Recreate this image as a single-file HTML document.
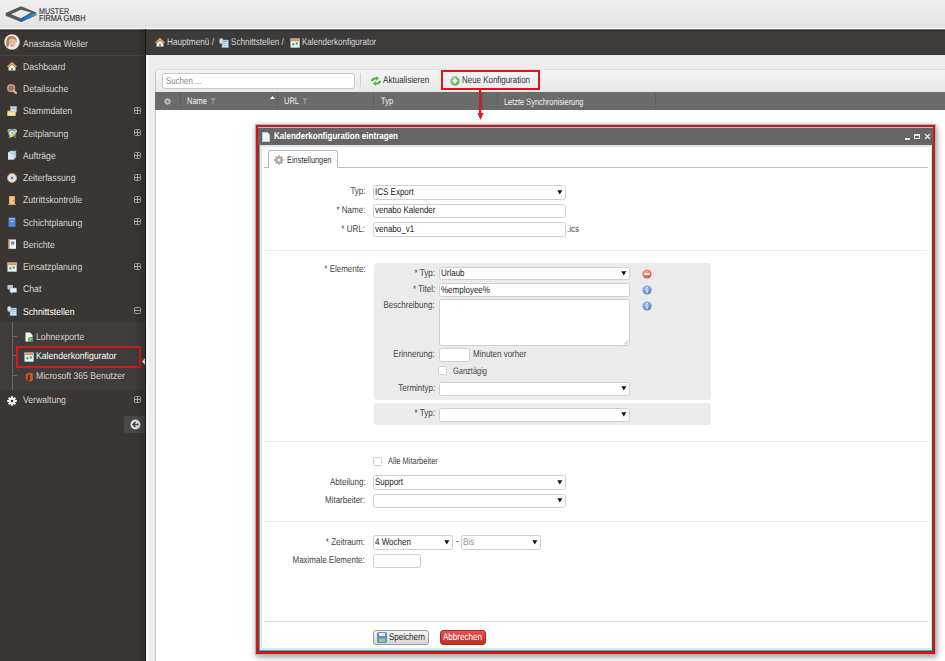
<!DOCTYPE html>
<html><head><meta charset="utf-8"><style>
html,body{margin:0;padding:0;}
body{width:945px;height:661px;overflow:hidden;position:relative;font-family:"Liberation Sans",sans-serif;background:#ececec;}
.r{position:absolute;}
.t{position:absolute;white-space:nowrap;line-height:1;text-rendering:geometricPrecision;}
.pm{width:5px;height:5px;border:1px solid #aaa49f;border-radius:1.5px;}
.pm i{position:absolute;background:#b9b3ae;}
.pm .h{left:0px;top:2px;width:5px;height:1px;}
.pm .v{left:2px;top:0px;width:1px;height:5px;}
</style></head>
<body>
<div class="r" style="left:0px;top:0px;width:945px;height:29px;background:linear-gradient(#f0f0f0,#e2e2e2);"></div>
<div class="r" style="left:0px;top:28px;width:945px;height:1px;background:#f6f6f6;"></div>
<svg class="r" style="left:0px;top:0px" width="40" height="26" viewBox="0 0 40 26"><path fill-rule="evenodd" d="M5.7 13 L21 6.2 L36.4 12.4 V15.2 L21 22 L5.7 15.8Z M11 14.3 L21 18.3 L31 12.6 L21 9.8Z" fill="#585858"/><defs><linearGradient id="lg" x1="0" x2="1"><stop offset="0" stop-color="#1060c8"/><stop offset="0.75" stop-color="#2090d0"/><stop offset="1" stop-color="#20b898"/></linearGradient></defs><path d="M21 18.6 L36.4 12.4 V15.2 L21 22Z" fill="url(#lg)"/></svg>
<div class="t" style="left:39.00px;top:7.00px;font-size:8.44px;color:#303030;font-weight:normal;transform:scaleX(0.8475);transform-origin:0 0;-webkit-text-stroke:0.12px #303030;">MUSTER</div>
<div class="t" style="left:39.00px;top:14.00px;font-size:8.68px;color:#303030;font-weight:normal;transform:scaleX(0.8475);transform-origin:0 0;-webkit-text-stroke:0.12px #303030;">FIRMA GMBH</div>
<div class="r" style="left:0px;top:29px;width:146px;height:632px;background:#3a3633;"></div>
<div class="r" style="left:0px;top:55px;width:146px;height:1px;background:#4a4542;"></div>
<svg class="r" style="left:3.5px;top:33.5px" width="16" height="16" viewBox="0 0 16 16"><defs><clipPath id="av"><circle cx="8" cy="8" r="6.9"/></clipPath></defs><circle cx="8" cy="8" r="7.8" fill="#d8d4d0"/><circle cx="8" cy="8" r="6.9" fill="#f4f1ee"/><g clip-path="url(#av)"><path d="M2.5 13 Q1.5 4 5 2.5 Q8.5 1.2 11.5 3.5 Q13.5 6 12.5 9 L11 6 Q8 4.5 5.5 6 L4.5 13Z" fill="#a88058"/><ellipse cx="8.3" cy="8.8" rx="3.4" ry="4.6" fill="#e6c0a6"/><path d="M5 5.5 Q8 3.8 11.6 6 L11.2 4.2 Q8 2.6 5 4.2Z" fill="#b89068"/><ellipse cx="8.3" cy="11.4" rx="1.3" ry="0.6" fill="#d88888"/><path d="M6 8.2H7.2M9.4 8.2H10.6" stroke="#9a7a70" stroke-width="0.6"/></g></svg>
<div class="t" style="left:22.80px;top:40.00px;font-size:9.80px;color:#d9d2cb;font-weight:normal;transform:scaleX(0.8857);transform-origin:0 0;">Anastasia Weiler</div>
<div class="t" style="left:22.90px;top:63.00px;font-size:9.80px;color:#d9d2cb;font-weight:normal;transform:scaleX(0.8837);transform-origin:0 0;">Dashboard</div>
<svg class="r" style="left:7px;top:61.4px" width="10" height="10" viewBox="0 0 10 10"><path d="M5 3.6 L8.4 6.4 V9.4 H1.6 V6.4Z" fill="#f6f6f6"/><rect x="4" y="6.4" width="2" height="3" rx="0.8" fill="#8c8c8c"/><path d="M0 5.6 L5 0.8 L10 5.6 L8.6 6.6 L5 3.2 L1.4 6.6Z" fill="#e4a458"/><path d="M0.3 9.8 Q1.5 8.4 2.8 9.2 H7.2 Q8.5 8.4 9.7 9.8Z" fill="#42b042"/></svg>
<div class="t" style="left:22.90px;top:85.00px;font-size:9.80px;color:#d9d2cb;font-weight:normal;transform:scaleX(0.8837);transform-origin:0 0;">Detailsuche</div>
<svg class="r" style="left:7px;top:83.7px" width="10" height="10" viewBox="0 0 10 10"><circle cx="4.2" cy="4.2" r="3.4" fill="#7a7f86" stroke="#d89a50" stroke-width="1.4"/><path d="M6.6 6.6 L9 9" stroke="#e8b070" stroke-width="2.2" stroke-linecap="round"/></svg>
<div class="t" style="left:22.90px;top:107.00px;font-size:9.80px;color:#d9d2cb;font-weight:normal;transform:scaleX(0.8837);transform-origin:0 0;">Stammdaten</div>
<svg class="r" style="left:7px;top:105.9px" width="10" height="10" viewBox="0 0 10 10"><rect x="3.5" y="0.5" width="6" height="5.5" fill="#cfe2f6" stroke="#8fb0d8" stroke-width="0.6"/><rect x="4.5" y="2" width="4" height="1" fill="#7ac070"/><path d="M0.5 4.5 H3.5 L4.5 5.5 H8.5 V9.8 H0.5Z" fill="#f2c860"/><rect x="0.5" y="6.2" width="8" height="3.6" fill="#fbe39a"/></svg>
<div class="r pm" style="left:134px;top:107px"><i class="h"></i><i class="v"></i></div>
<div class="t" style="left:22.90px;top:130.00px;font-size:9.80px;color:#d9d2cb;font-weight:normal;transform:scaleX(0.8837);transform-origin:0 0;">Zeitplanung</div>
<svg class="r" style="left:7px;top:128.2px" width="10" height="10" viewBox="0 0 10 10"><ellipse cx="2.4" cy="2.4" rx="2" ry="1.4" transform="rotate(-40 2.4 2.4)" fill="#f0c040"/><ellipse cx="8" cy="2.4" rx="2" ry="1.4" transform="rotate(40 8 2.4)" fill="#f0c040"/><path d="M2 9.6L3 8.3M8.6 9.6L7.6 8.3" stroke="#e8e8e8" stroke-width="1"/><circle cx="5.2" cy="5" r="4" fill="#5a9ad8"/><circle cx="4.8" cy="5.2" r="2.5" fill="#e8f4fc"/><circle cx="5.2" cy="5" r="0.7" fill="#333"/><path d="M3.2 9.4L8.8 3.6" stroke="#f2d040" stroke-width="1.8"/><path d="M8.2 4.2L9.6 2.8" stroke="#f0c8a0" stroke-width="1.8"/></svg>
<div class="r pm" style="left:134px;top:129px"><i class="h"></i><i class="v"></i></div>
<div class="t" style="left:22.90px;top:152.00px;font-size:9.80px;color:#d9d2cb;font-weight:normal;transform:scaleX(0.8837);transform-origin:0 0;">Aufträge</div>
<svg class="r" style="left:7px;top:150.4px" width="10" height="10" viewBox="0 0 10 10"><path d="M1 2.5 L3.5 0.8 H9.2 V7.5 L6.8 9.5 H1Z" fill="#a9c6ee"/><path d="M1 2.5 H6.8 V9.5 H1Z" fill="#d6e6f8"/><path d="M3.5 3.8 H8.5" stroke="#8cd070" stroke-width="0.8"/></svg>
<div class="r pm" style="left:134px;top:152px"><i class="h"></i><i class="v"></i></div>
<div class="t" style="left:22.90px;top:174.00px;font-size:9.80px;color:#d9d2cb;font-weight:normal;transform:scaleX(0.8837);transform-origin:0 0;">Zeiterfassung</div>
<svg class="r" style="left:7px;top:172.7px" width="10" height="10" viewBox="0 0 10 10"><circle cx="5" cy="5" r="4.4" fill="#f2f2f2" stroke="#c8a064" stroke-width="1.1"/><circle cx="5" cy="5" r="2.6" fill="#b8d4f0"/><circle cx="5" cy="5" r="0.9" fill="#555"/></svg>
<div class="r pm" style="left:134px;top:174px"><i class="h"></i><i class="v"></i></div>
<div class="t" style="left:22.90px;top:196.00px;font-size:9.80px;color:#d9d2cb;font-weight:normal;transform:scaleX(0.8837);transform-origin:0 0;">Zutrittskontrolle</div>
<svg class="r" style="left:7px;top:194.9px" width="10" height="10" viewBox="0 0 10 10"><rect x="2" y="1" width="6" height="8.5" fill="#e8b060"/><rect x="3" y="2" width="4" height="6.8" fill="#f3c87e"/><circle cx="6.2" cy="5.4" r="0.5" fill="#a06020"/><path d="M1 9.6 H9" stroke="#ddd" stroke-width="0.6"/></svg>
<div class="r pm" style="left:134px;top:196px"><i class="h"></i><i class="v"></i></div>
<div class="t" style="left:22.90px;top:219.00px;font-size:9.80px;color:#d9d2cb;font-weight:normal;transform:scaleX(0.8837);transform-origin:0 0;">Schichtplanung</div>
<svg class="r" style="left:7px;top:217.2px" width="10" height="10" viewBox="0 0 10 10"><rect x="1.5" y="0.5" width="7" height="9.3" rx="0.6" fill="#4a8ad8"/><rect x="2.2" y="1.2" width="5.6" height="1.5" fill="#8ab8ee"/><rect x="3.2" y="4" width="3.6" height="0.7" fill="#b8d8f8"/></svg>
<div class="r pm" style="left:134px;top:218px"><i class="h"></i><i class="v"></i></div>
<div class="t" style="left:22.90px;top:241.00px;font-size:9.80px;color:#d9d2cb;font-weight:normal;transform:scaleX(0.8837);transform-origin:0 0;">Berichte</div>
<svg class="r" style="left:7px;top:239.4px" width="10" height="10" viewBox="0 0 10 10"><rect x="1" y="0.5" width="8" height="9.3" fill="#f6f6f6"/><rect x="1" y="0.5" width="1.6" height="9.3" fill="#d08050"/><rect x="4" y="2.5" width="3.5" height="3" fill="#5a90d8"/><rect x="4.5" y="6.5" width="2.5" height="0.6" fill="#aaa"/></svg>
<div class="t" style="left:22.90px;top:263.00px;font-size:9.80px;color:#d9d2cb;font-weight:normal;transform:scaleX(0.8837);transform-origin:0 0;">Einsatzplanung</div>
<svg class="r" style="left:7px;top:261.6px" width="10" height="10" viewBox="0 0 10 10"><rect x="0.8" y="0.8" width="8.6" height="8.6" fill="#eef4fb" stroke="#a8c4e4" stroke-width="0.8"/><rect x="1.2" y="1.2" width="7.8" height="2" fill="#f08a3a"/><circle cx="3.4" cy="6.3" r="1.2" fill="#48b048"/><circle cx="6.8" cy="5.5" r="1.2" fill="#48b048"/></svg>
<div class="r pm" style="left:134px;top:263px"><i class="h"></i><i class="v"></i></div>
<div class="t" style="left:22.90px;top:285.00px;font-size:9.80px;color:#d9d2cb;font-weight:normal;transform:scaleX(0.8837);transform-origin:0 0;">Chat</div>
<svg class="r" style="left:7px;top:283.9px" width="10" height="10" viewBox="0 0 10 10"><path d="M0.5 1 H6 V5 H3 L1.5 6.5 V5 H0.5Z" fill="#b8c4d0"/><path d="M3 4 H9.6 V8.3 H6 L4.5 9.8 V8.3 H3Z" fill="#e8f2fc" stroke="#88aad0" stroke-width="0.5"/></svg>
<div class="t" style="left:22.90px;top:308.00px;font-size:9.80px;color:#ffffff;font-weight:normal;transform:scaleX(0.8837);transform-origin:0 0;">Schnittstellen</div>
<svg class="r" style="left:7px;top:306.1px" width="10" height="10" viewBox="0 0 10 10"><rect x="3" y="2" width="6.5" height="7.8" fill="#d6e6f8" stroke="#5c8cc8" stroke-width="0.6"/><rect x="4" y="3" width="4.5" height="1" fill="#7cc070"/><path d="M4 5.5 H8.5 M4 7.3 H8.5 M6.2 4.5 V9" stroke="#8cb0d8" stroke-width="0.5"/><rect x="0.5" y="0.3" width="3.5" height="5.5" rx="1.7" fill="#e4e4e4" stroke="#9a9a9a" stroke-width="0.5"/></svg>
<div class="r pm" style="left:134px;top:307px"><i class="h"></i></div>
<div class="r" style="left:0px;top:322px;width:146px;height:67.5px;background:#3f3d3b;"></div>
<div class="r" style="left:12px;top:322px;width:1px;height:67.5px;background:#6a6663;"></div>
<div class="r" style="left:13px;top:336px;width:4px;height:1px;background:#6a6663;"></div>
<div class="r" style="left:13px;top:355px;width:4px;height:1px;background:#6a6663;"></div>
<div class="r" style="left:13px;top:375px;width:4px;height:1px;background:#6a6663;"></div>
<div class="t" style="left:36.40px;top:333.00px;font-size:9.80px;color:#d9d2cb;font-weight:normal;transform:scaleX(0.8857);transform-origin:0 0;">Lohnexporte</div>
<svg class="r" style="left:24px;top:332px" width="10" height="10" viewBox="0 0 10 10"><path d="M1.5 0.5 H6 L8.5 3 V9.5 H1.5Z" fill="#f6f6f6"/><path d="M6 0.5 V3 H8.5" fill="#ddd"/><circle cx="6.6" cy="7.4" r="2.5" fill="#3ca83c"/><path d="M5.4 7.4 H7.8 M6.6 6.2 V8.6" stroke="#bfe8b0" stroke-width="0.7"/></svg>
<svg class="r" style="left:24px;top:352px" width="10" height="10" viewBox="0 0 10 10"><rect x="0.8" y="0.8" width="8.6" height="8.6" fill="#eef4fb" stroke="#a8c4e4" stroke-width="0.8"/><rect x="1.2" y="1.2" width="7.8" height="2" fill="#f08a3a"/><circle cx="3.4" cy="6.3" r="1.2" fill="#48b048"/><circle cx="6.8" cy="5.5" r="1.2" fill="#48b048"/></svg>
<svg class="r" style="left:23.5px;top:372px" width="10" height="10" viewBox="0 0 10 10"><path d="M1.8 2.3 L6.2 0.5 L8.8 1.6 V8.4 L6.2 9.6 L1.8 7.9 L6.2 8.5 V2 L3.7 2.9 V7.1 L1.8 7.9Z" fill="#e8501c"/></svg>
<svg class="r" style="left:7px;top:395.5px" width="10" height="10" viewBox="0 0 10 10"><g fill="#f0f0f0"><circle cx="5" cy="5" r="3.4"/><path d="M4 0.2H6V2H4ZM4 8H6V9.8H4ZM0.2 4H2V6H0.2ZM8 4H9.8V6H8Z"/><path d="M4 0.2H6V2H4ZM4 8H6V9.8H4ZM0.2 4H2V6H0.2ZM8 4H9.8V6H8Z" transform="rotate(45 5 5)"/></g><circle cx="5" cy="5" r="1.3" fill="#3a3633"/></svg>
<div class="t" style="left:36.40px;top:352.00px;font-size:9.80px;color:#ffffff;font-weight:normal;transform:scaleX(0.8837);transform-origin:0 0;">Kalenderkonfigurator</div>
<div class="t" style="left:36.40px;top:372.00px;font-size:9.80px;color:#d9d2cb;font-weight:normal;transform:scaleX(0.8827);transform-origin:0 0;">Microsoft 365 Benutzer</div>
<div class="r" style="left:16px;top:346px;width:125px;height:22px;border:2px solid #d9161c;box-sizing:border-box;"></div>
<svg class="r" style="left:142px;top:357px" width="4" height="9"><polygon points="4,0 0,4.5 4,9" fill="#f0f0f0"/></svg>
<div class="t" style="left:22.50px;top:396.00px;font-size:9.80px;color:#d9d2cb;font-weight:normal;transform:scaleX(0.8837);transform-origin:0 0;">Verwaltung</div>
<div class="r pm" style="left:134px;top:396px"><i class="h"></i><i class="v"></i></div>
<div class="r" style="left:124px;top:416px;width:22px;height:17px;background:#4a4846;border-radius:3px 0 0 3px;"></div>
<svg class="r" style="left:130px;top:419px" width="11" height="11" viewBox="0 0 11 11">
<circle cx="5.5" cy="5.5" r="5" fill="#e0e0e0"/><path d="M8.5 5.5H3.2M5.5 3L3 5.5 5.5 8" stroke="#4a4846" stroke-width="1.6" fill="none"/></svg>
<div class="r" style="left:146px;top:29px;width:799px;height:26px;background:#3d3b39;"></div>
<div class="r" style="left:0px;top:29px;width:945px;height:1px;background:#7c7a78;"></div>
<div class="r" style="left:0px;top:30px;width:945px;height:1px;background:#2c2a28;"></div>
<div class="r" style="left:146px;top:55px;width:799px;height:606px;background:#ededed;"></div>
<div class="r" style="left:147px;top:55px;width:1px;height:606px;background:#fdfdfd;"></div>
<div class="r" style="left:145px;top:29px;width:1px;height:632px;background:#1e1a17;"></div>
<div class="r" style="left:133px;top:29px;width:12px;height:632px;background:linear-gradient(to right,rgba(0,0,0,0),rgba(0,0,0,.18));"></div>
<div class="t" style="left:166.90px;top:38.00px;font-size:9.80px;color:#d8d8d8;font-weight:normal;transform:scaleX(0.8367);transform-origin:0 0;">Hauptmenü /</div>
<svg class="r" style="left:154.5px;top:37px" width="10" height="10" viewBox="0 0 10 10"><path d="M5 3.6 L8.4 6.4 V9.4 H1.6 V6.4Z" fill="#f6f6f6"/><rect x="4" y="6.4" width="2" height="3" rx="0.8" fill="#8c8c8c"/><path d="M0 5.6 L5 0.8 L10 5.6 L8.6 6.6 L5 3.2 L1.4 6.6Z" fill="#e4a458"/><path d="M0.3 9.8 Q1.5 8.4 2.8 9.2 H7.2 Q8.5 8.4 9.7 9.8Z" fill="#42b042"/></svg>
<svg class="r" style="left:219px;top:37.5px" width="10" height="10" viewBox="0 0 10 10"><rect x="3" y="2" width="6.5" height="7.8" fill="#d6e6f8" stroke="#5c8cc8" stroke-width="0.6"/><rect x="4" y="3" width="4.5" height="1" fill="#7cc070"/><path d="M4 5.5 H8.5 M4 7.3 H8.5 M6.2 4.5 V9" stroke="#8cb0d8" stroke-width="0.5"/><rect x="0.5" y="0.3" width="3.5" height="5.5" rx="1.7" fill="#e4e4e4" stroke="#9a9a9a" stroke-width="0.5"/></svg>
<svg class="r" style="left:289.5px;top:37.5px" width="10" height="10" viewBox="0 0 10 10"><rect x="0.8" y="0.8" width="8.6" height="8.6" fill="#eef4fb" stroke="#a8c4e4" stroke-width="0.8"/><rect x="1.2" y="1.2" width="7.8" height="2" fill="#f08a3a"/><circle cx="3.4" cy="6.3" r="1.2" fill="#48b048"/><circle cx="6.8" cy="5.5" r="1.2" fill="#48b048"/></svg>
<div class="t" style="left:230.90px;top:38.00px;font-size:9.80px;color:#d8d8d8;font-weight:normal;transform:scaleX(0.8265);transform-origin:0 0;">Schnittstellen /</div>
<div class="t" style="left:302.00px;top:38.00px;font-size:9.80px;color:#d8d8d8;font-weight:normal;transform:scaleX(0.8163);transform-origin:0 0;">Kalenderkonfigurator</div>
<div class="r" style="left:155px;top:69px;width:790px;height:592px;background:#fff;border-left:1px solid #c4c4c4;border-top:1px solid #dedede;border-top-left-radius:4px;box-sizing:border-box;"></div>
<div class="r" style="left:156px;top:70px;width:789px;height:22px;background:linear-gradient(#f4f4f4,#e9e9e9);"></div>
<div class="r" style="left:162px;top:73px;width:193px;height:16px;background:#fff;border:1px solid #c9c9c9;border-radius:3px;box-sizing:border-box;"></div>
<div class="t" style="left:165.50px;top:77.00px;font-size:9.80px;color:#8a8a8a;font-weight:normal;transform:scaleX(0.8061);transform-origin:0 0;">Suchen ...</div>
<div class="r" style="left:360px;top:73px;width:1px;height:14px;background:#d4d4d4;"></div>
<div class="t" style="left:382.60px;top:76.00px;font-size:9.80px;color:#333;font-weight:normal;transform:scaleX(0.8235);transform-origin:0 0;">Aktualisieren</div>
<svg class="r" style="left:370.7px;top:75.5px" width="10" height="10" viewBox="0 0 10 10"><path d="M0.9 5.2 Q1.4 2.4 5.2 2.3" stroke="#5cb35c" stroke-width="2.2" fill="none"/><polygon points="5,0 8.4,2.4 5,4.8" fill="#5cb35c"/><path d="M9.1 4.8 Q8.6 7.6 4.8 7.7" stroke="#5cb35c" stroke-width="2.2" fill="none"/><polygon points="5,5.2 1.6,7.6 5,10" fill="#5cb35c"/></svg>
<svg class="r" style="left:449.8px;top:75.5px" width="10" height="10" viewBox="0 0 10 10"><defs><radialGradient id="gp" cx="0.4" cy="0.35" r="0.75"><stop offset="0" stop-color="#a8dc98"/><stop offset="1" stop-color="#4ea548"/></radialGradient></defs><circle cx="5" cy="5" r="4.7" fill="url(#gp)"/><path d="M2.6 5H7.4M5 2.6V7.4" stroke="#fff" stroke-width="1.5"/></svg>
<div class="t" style="left:462.30px;top:76.00px;font-size:9.80px;color:#333;font-weight:normal;transform:scaleX(0.8102);transform-origin:0 0;">Neue Konfiguration</div>
<div class="r" style="left:441px;top:70px;width:99px;height:20px;border:2px solid #e0141c;box-sizing:border-box;"></div>
<div class="r" style="left:155px;top:92px;width:790px;height:18px;background:#6b6b6b;"></div>
<div class="r" style="left:180px;top:92px;width:1px;height:18px;background:#5f5f5f;"></div>
<div class="r" style="left:277px;top:92px;width:1px;height:18px;background:#5f5f5f;"></div>
<div class="r" style="left:373px;top:92px;width:1px;height:18px;background:#5f5f5f;"></div>
<div class="r" style="left:497px;top:92px;width:1px;height:18px;background:#5f5f5f;"></div>
<div class="r" style="left:655px;top:92px;width:1px;height:18px;background:#5f5f5f;"></div>
<div class="t" style="left:187.20px;top:97.00px;font-size:9.53px;color:#f6f6f6;font-weight:normal;transform:scaleX(0.7874);transform-origin:0 0;">Name</div>
<svg class="r" style="left:164.3px;top:97.7px" width="7" height="7" viewBox="0 0 7 7"><g fill="#b9b9b9"><circle cx="3.5" cy="3.5" r="2.5"/><path d="M2.8 0H4.2V7H2.8ZM0 2.8H7V4.2H0Z"/><path d="M2.8 0H4.2V7H2.8ZM0 2.8H7V4.2H0Z" transform="rotate(45 3.5 3.5)"/></g><circle cx="3.5" cy="3.5" r="1" fill="#6b6b6b"/></svg>
<svg class="r" style="left:210px;top:98px" width="6" height="6" viewBox="0 0 6 6"><path d="M0 0H6L3.8 2.8V6H2.2V2.8Z" fill="#8e8e8e"/></svg>
<svg class="r" style="left:301.5px;top:98px" width="6" height="6" viewBox="0 0 6 6"><path d="M0 0H6L3.8 2.8V6H2.2V2.8Z" fill="#8e8e8e"/></svg>
<svg class="r" style="left:269.8px;top:96.4px" width="5" height="3" viewBox="0 0 5 3"><polygon points="0,3 2.5,0 5,3" fill="#f4f4f4"/></svg>
<div class="t" style="left:283.70px;top:97.00px;font-size:9.53px;color:#f2f2f2;font-weight:normal;transform:scaleX(0.7874);transform-origin:0 0;">URL</div>
<div class="t" style="left:380.60px;top:97.00px;font-size:9.53px;color:#f2f2f2;font-weight:normal;transform:scaleX(0.7874);transform-origin:0 0;">Typ</div>
<div class="t" style="left:503.60px;top:97.00px;font-size:9.41px;color:#f2f2f2;font-weight:normal;transform:scaleX(0.7874);transform-origin:0 0;">Letzte Synchronisierung</div>
<div class="r" style="left:479px;top:90px;width:2px;height:24px;background:#e8141c;box-shadow:1px 1px 2px rgba(0,0,0,.25);"></div>
<svg class="r" style="left:476.5px;top:113px" width="7" height="7" viewBox="0 0 7 7"><polygon points="0.5,0 6.5,0 3.5,7" fill="#e8141c"/></svg>
<div class="r" style="left:255px;top:124px;width:681px;height:531px;background:#a3baba;box-shadow:1px 2px 6px rgba(0,0,0,.4);"></div>
<div class="r" style="left:256px;top:125px;width:679px;height:529px;background:#de0f12;"></div>
<div class="r" style="left:258px;top:127px;width:675px;height:525px;background:#3f5353;"></div>
<div class="r" style="left:259px;top:128px;width:673px;height:523px;background:#8e9090;"></div>
<div class="r" style="left:258px;top:127px;width:675px;height:1px;background:#a9c4c4;"></div>
<div class="r" style="left:258px;top:128px;width:675px;height:17px;background:#656565;"></div>
<div class="r" style="left:260px;top:145px;width:672px;height:505px;background:#dce6ef;"></div>
<div class="r" style="left:262px;top:147px;width:669px;height:501px;background:#fff;"></div>
<div class="t" style="left:273.80px;top:132.00px;font-size:9.80px;color:#ffffff;font-weight:bold;transform:scaleX(0.8194);transform-origin:0 0;">Kalenderkonfiguration eintragen</div>
<svg class="r" style="left:262px;top:132px" width="8" height="10" viewBox="0 0 8 10"><path d="M0.5 0.5H5.5L7.5 2.5V9.5H0.5Z" fill="#eef3fb" stroke="#c9d6e8" stroke-width="0.8"/></svg>
<div class="r" style="left:905px;top:138px;width:5px;height:1.5px;background:#e6e6e6;"></div>
<div class="r" style="left:914px;top:134px;width:6px;height:5px;border:1px solid #e6e6e6;border-top-width:2px;box-sizing:border-box;"></div>
<svg class="r" style="left:924px;top:133px" width="7" height="7" viewBox="0 0 7 7"><path d="M1 1L6 6M6 1L1 6" stroke="#ececec" stroke-width="1.3"/></svg>
<div class="r" style="left:264px;top:167px;width:664px;height:1px;background:#bdbdbd;"></div>
<div class="r" style="left:267.5px;top:150px;width:70.0px;height:18px;background:#fff;border:1px solid #bdbdbd;border-bottom:none;border-radius:3px 3px 0 0;box-sizing:border-box;"></div>
<div class="t" style="left:286.50px;top:155.00px;font-size:9.41px;color:#333;font-weight:normal;transform:scaleX(0.7874);transform-origin:0 0;">Einstellungen</div>
<svg class="r" style="left:274px;top:155px" width="10" height="10" viewBox="0 0 10 10"><g fill="#a9a9a9"><circle cx="5" cy="5" r="3.6"/><path d="M4.1 0.2H5.9V9.8H4.1ZM0.2 4.1H9.8V5.9H0.2Z"/><path d="M4.1 0.2H5.9V9.8H4.1ZM0.2 4.1H9.8V5.9H0.2Z" transform="rotate(45 5 5)"/></g><circle cx="5" cy="5" r="1.8" fill="#d6d6d6"/><circle cx="5" cy="5" r="0.9" fill="#fff"/></svg>
<div class="t" style="right:579.80px;top:187.00px;font-size:9.80px;color:#444;font-weight:normal;transform:scaleX(0.8163);transform-origin:100% 0;">Typ:</div>
<div class="r" style="left:373px;top:185px;width:193px;height:14.5px;background:#fff;border:1px solid #d0d0d0;border-radius:2.5px;box-sizing:border-box;"></div><svg class="r" style="left:556.5px;top:189.7px" width="6" height="5"><polygon points="0.3,0.3 5.3,0.3 2.8,4.6" fill="#111"/></svg><div class="t" style="left:375.00px;top:188.00px;font-size:9.80px;color:#222;font-weight:normal;transform:scaleX(0.8163);transform-origin:0 0;">ICS Export</div>
<div class="t" style="right:579.80px;top:206.00px;font-size:9.80px;color:#444;font-weight:normal;transform:scaleX(0.8163);transform-origin:100% 0;">* Name:</div>
<div class="r" style="left:373px;top:203.5px;width:193px;height:14.5px;background:#fff;border:1px solid #d0d0d0;border-radius:2.5px;box-sizing:border-box;"></div>
<div class="t" style="left:375.00px;top:206.00px;font-size:9.80px;color:#222;font-weight:normal;transform:scaleX(0.8163);transform-origin:0 0;">venabo Kalender</div>
<div class="t" style="right:579.80px;top:225.00px;font-size:9.80px;color:#444;font-weight:normal;transform:scaleX(0.8163);transform-origin:100% 0;">* URL:</div>
<div class="r" style="left:373px;top:222px;width:193px;height:14.5px;background:#fff;border:1px solid #d0d0d0;border-radius:2.5px;box-sizing:border-box;"></div>
<div class="t" style="left:375.00px;top:225.00px;font-size:9.80px;color:#222;font-weight:normal;transform:scaleX(0.8163);transform-origin:0 0;">venabo_v1</div>
<div class="t" style="left:566.80px;top:225.00px;font-size:9.80px;color:#444;font-weight:normal;transform:scaleX(0.8163);transform-origin:0 0;">.ics</div>
<div class="r" style="left:264px;top:250px;width:664px;height:1px;background:#ededed;"></div>
<div class="t" style="right:579.80px;top:265.00px;font-size:9.80px;color:#444;font-weight:normal;transform:scaleX(0.8163);transform-origin:100% 0;">* Elemente:</div>
<div class="r" style="left:373.5px;top:262.8px;width:337.0px;height:136.8px;background:#ebebeb;border-radius:3px;"></div>
<div class="t" style="right:510.00px;top:269.00px;font-size:9.80px;color:#444;font-weight:normal;transform:scaleX(0.8163);transform-origin:100% 0;">* Typ:</div>
<div class="r" style="left:438.8px;top:266.7px;width:191.7px;height:13.699999999999989px;background:#fff;border:1px solid #d0d0d0;border-radius:2.5px;box-sizing:border-box;"></div><svg class="r" style="left:621.0px;top:270.9px" width="6" height="5"><polygon points="0.3,0.3 5.3,0.3 2.8,4.6" fill="#111"/></svg><div class="t" style="left:440.80px;top:269.00px;font-size:9.80px;color:#222;font-weight:normal;transform:scaleX(0.8163);transform-origin:0 0;">Urlaub</div>
<div class="t" style="right:510.00px;top:285.00px;font-size:9.80px;color:#444;font-weight:normal;transform:scaleX(0.8163);transform-origin:100% 0;">* Titel:</div>
<div class="r" style="left:438.8px;top:283px;width:191.7px;height:13.800000000000011px;background:#fff;border:1px solid #d0d0d0;border-radius:2.5px;box-sizing:border-box;"></div>
<div class="t" style="left:440.50px;top:286.00px;font-size:9.80px;color:#222;font-weight:normal;transform:scaleX(0.8163);transform-origin:0 0;">%employee%</div>
<div class="t" style="right:510.00px;top:301.00px;font-size:9.80px;color:#444;font-weight:normal;transform:scaleX(0.8163);transform-origin:100% 0;">Beschreibung:</div>
<div class="r" style="left:438.8px;top:299.4px;width:191.7px;height:47.10000000000002px;background:#fff;border:1px solid #d0d0d0;border-radius:2.5px;box-sizing:border-box;"></div>
<svg class="r" style="left:623px;top:339px" width="6" height="6"><path d="M1 5.5L5.5 1M3 5.5L5.5 3" stroke="#999" stroke-width="0.7"/></svg>
<div class="t" style="right:510.00px;top:350.00px;font-size:9.80px;color:#444;font-weight:normal;transform:scaleX(0.8163);transform-origin:100% 0;">Erinnerung:</div>
<div class="r" style="left:438.8px;top:347.6px;width:31.19999999999999px;height:14.399999999999977px;background:#fff;border:1px solid #d0d0d0;border-radius:2.5px;box-sizing:border-box;"></div>
<div class="t" style="left:472.90px;top:350.00px;font-size:9.80px;color:#444;font-weight:normal;transform:scaleX(0.8163);transform-origin:0 0;">Minuten vorher</div>
<div class="r" style="left:438.3px;top:366.2px;width:8.300000000000011px;height:8.5px;background:#fff;border:1px solid #d0d0d0;border-radius:2.5px;box-sizing:border-box;border-radius:1.5px;"></div>
<div class="t" style="left:453.00px;top:367.00px;font-size:9.47px;color:#444;font-weight:normal;transform:scaleX(0.7874);transform-origin:0 0;">Ganztägig</div>
<div class="t" style="right:510.00px;top:384.00px;font-size:9.80px;color:#444;font-weight:normal;transform:scaleX(0.8163);transform-origin:100% 0;">Termintyp:</div>
<div class="r" style="left:438.8px;top:381.5px;width:191.7px;height:14.800000000000011px;background:#fff;border:1px solid #d0d0d0;border-radius:2.5px;box-sizing:border-box;"></div><svg class="r" style="left:621.0px;top:386.3px" width="6" height="5"><polygon points="0.3,0.3 5.3,0.3 2.8,4.6" fill="#111"/></svg>
<div class="r" style="left:373.5px;top:403px;width:337.0px;height:21.69999999999999px;background:#ebebeb;border-radius:3px;"></div>
<div class="t" style="right:510.00px;top:409.00px;font-size:9.80px;color:#444;font-weight:normal;transform:scaleX(0.8163);transform-origin:100% 0;">* Typ:</div>
<div class="r" style="left:438.8px;top:407.7px;width:191.7px;height:14.0px;background:#fff;border:1px solid #d0d0d0;border-radius:2.5px;box-sizing:border-box;"></div><svg class="r" style="left:621.0px;top:412.1px" width="6" height="5"><polygon points="0.3,0.3 5.3,0.3 2.8,4.6" fill="#111"/></svg>
<svg class="r" style="left:641.5px;top:268.5px" width="10" height="10" viewBox="0 0 10 10"><defs><radialGradient id="rg" cx="0.4" cy="0.3" r="0.8"><stop offset="0" stop-color="#f7a49c"/><stop offset="1" stop-color="#d9463c"/></radialGradient></defs><circle cx="5" cy="5" r="4.6" fill="url(#rg)"/><rect x="2.3" y="4.1" width="5.4" height="1.8" fill="#fff"/></svg>
<svg class="r" style="left:641.5px;top:284.7px" width="10" height="10" viewBox="0 0 10 10"><defs><radialGradient id="bg289" cx="0.4" cy="0.3" r="0.8"><stop offset="0" stop-color="#a8c4ea"/><stop offset="1" stop-color="#4d79b8"/></radialGradient></defs><circle cx="5" cy="5" r="4.6" fill="url(#bg289)"/><rect x="4.4" y="2.2" width="1.2" height="1.2" fill="#fff"/><rect x="4.5" y="4" width="1" height="3.8" fill="#fff"/></svg>
<svg class="r" style="left:641.5px;top:300.5px" width="10" height="10" viewBox="0 0 10 10"><defs><radialGradient id="bg305" cx="0.4" cy="0.3" r="0.8"><stop offset="0" stop-color="#a8c4ea"/><stop offset="1" stop-color="#4d79b8"/></radialGradient></defs><circle cx="5" cy="5" r="4.6" fill="url(#bg305)"/><rect x="4.4" y="2.2" width="1.2" height="1.2" fill="#fff"/><rect x="4.5" y="4" width="1" height="3.8" fill="#fff"/></svg>
<div class="r" style="left:264px;top:441px;width:664px;height:1px;background:#ededed;"></div>
<div class="r" style="left:373.3px;top:457px;width:8.399999999999977px;height:8.600000000000023px;background:#fff;border:1px solid #d0d0d0;border-radius:2.5px;box-sizing:border-box;border-radius:1.5px;"></div>
<div class="t" style="left:387.80px;top:457.00px;font-size:9.49px;color:#444;font-weight:normal;transform:scaleX(0.7874);transform-origin:0 0;">Alle Mitarbeiter</div>
<div class="t" style="right:579.80px;top:478.00px;font-size:9.80px;color:#444;font-weight:normal;transform:scaleX(0.8163);transform-origin:100% 0;">Abteilung:</div>
<div class="r" style="left:373.3px;top:475px;width:192.7px;height:15px;background:#fff;border:1px solid #d0d0d0;border-radius:2.5px;box-sizing:border-box;"></div><svg class="r" style="left:556.5px;top:479.9px" width="6" height="5"><polygon points="0.3,0.3 5.3,0.3 2.8,4.6" fill="#111"/></svg><div class="t" style="left:375.30px;top:478.00px;font-size:9.80px;color:#222;font-weight:normal;transform:scaleX(0.8163);transform-origin:0 0;">Support</div>
<div class="t" style="right:579.80px;top:496.00px;font-size:9.80px;color:#444;font-weight:normal;transform:scaleX(0.8163);transform-origin:100% 0;">Mitarbeiter:</div>
<div class="r" style="left:373.3px;top:493.7px;width:192.7px;height:14.300000000000011px;background:#fff;border:1px solid #d0d0d0;border-radius:2.5px;box-sizing:border-box;"></div><svg class="r" style="left:556.5px;top:498.2px" width="6" height="5"><polygon points="0.3,0.3 5.3,0.3 2.8,4.6" fill="#111"/></svg>
<div class="r" style="left:264px;top:521px;width:664px;height:1px;background:#ededed;"></div>
<div class="t" style="right:579.80px;top:538.00px;font-size:9.80px;color:#444;font-weight:normal;transform:scaleX(0.8163);transform-origin:100% 0;">* Zeitraum:</div>
<div class="r" style="left:373.3px;top:535px;width:80.0px;height:14.600000000000023px;background:#fff;border:1px solid #d0d0d0;border-radius:2.5px;box-sizing:border-box;"></div><svg class="r" style="left:443.8px;top:539.7px" width="6" height="5"><polygon points="0.3,0.3 5.3,0.3 2.8,4.6" fill="#111"/></svg><div class="t" style="left:375.30px;top:538.00px;font-size:9.80px;color:#222;font-weight:normal;transform:scaleX(0.8163);transform-origin:0 0;">4 Wochen</div>
<div class="t" style="left:455.50px;top:537.00px;font-size:9.80px;color:#444;font-weight:normal;transform:scaleX(0.8163);transform-origin:0 0;">-</div>
<div class="r" style="left:461.3px;top:535px;width:79.69999999999999px;height:14.600000000000023px;background:#fff;border:1px solid #d0d0d0;border-radius:2.5px;box-sizing:border-box;"></div><svg class="r" style="left:531.5px;top:539.7px" width="6" height="5"><polygon points="0.3,0.3 5.3,0.3 2.8,4.6" fill="#111"/></svg><div class="t" style="left:463.30px;top:538.00px;font-size:9.80px;color:#8c8c8c;font-weight:normal;transform:scaleX(0.8163);transform-origin:0 0;">Bis</div>
<div class="t" style="right:579.80px;top:556.00px;font-size:9.80px;color:#444;font-weight:normal;transform:scaleX(0.8143);transform-origin:100% 0;">Maximale Elemente:</div>
<div class="r" style="left:373.3px;top:553.6px;width:48.19999999999999px;height:14.699999999999932px;background:#fff;border:1px solid #d0d0d0;border-radius:2.5px;box-sizing:border-box;"></div>
<div class="r" style="left:264px;top:621px;width:664px;height:1px;background:#d9d9d9;"></div>
<div class="r" style="left:373.2px;top:629.9px;width:55.60000000000002px;height:14.800000000000068px;background:linear-gradient(#f6f6f6,#d6d6d6);border:1px solid #9a9a9a;border-radius:3px;box-sizing:border-box;"></div>
<svg class="r" style="left:377px;top:632px" width="10" height="11" viewBox="0 0 10 11"><rect x="0.5" y="0.5" width="9" height="10" rx="1" fill="#5b8fd6" stroke="#3f6fb3" stroke-width="0.6"/><rect x="2" y="1" width="6" height="3" fill="#e8f0fa"/><rect x="1.8" y="6.5" width="6.4" height="3.5" fill="#8fce7a"/></svg>
<div class="t" style="left:389.30px;top:633.00px;font-size:9.80px;color:#222;font-weight:normal;transform:scaleX(0.8163);transform-origin:0 0;">Speichern</div>
<div class="r" style="left:439.5px;top:629.9px;width:46.19999999999999px;height:14.800000000000068px;background:linear-gradient(#e0544e,#bf2f2a);border:1px solid #a82824;border-radius:3px;box-sizing:border-box;"></div>
<div class="t" style="left:443.00px;top:633.00px;font-size:9.80px;color:#fff;font-weight:normal;transform:scaleX(0.8204);transform-origin:0 0;">Abbrechen</div>
</body></html>
